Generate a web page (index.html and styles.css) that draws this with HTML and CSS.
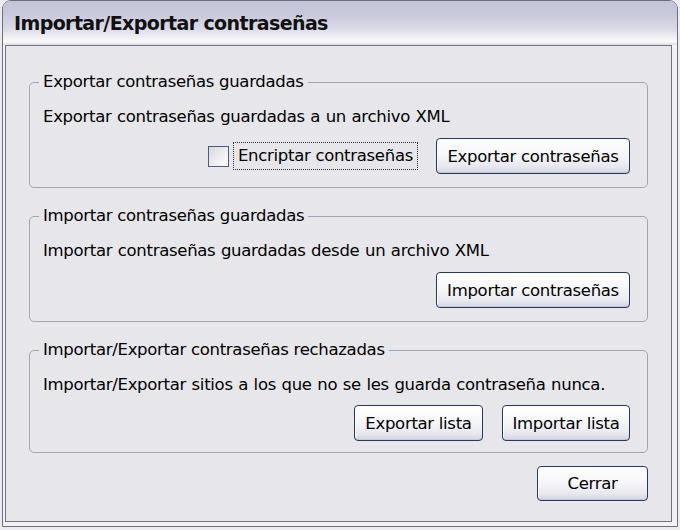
FILE: index.html
```html
<!DOCTYPE html>
<html lang="es">
<head>
<meta charset="utf-8">
<title>Importar/Exportar contraseñas</title>
<link rel="stylesheet" href="styles.css">
</head>
<body>
<div class="window">
  <div class="titlebar">Importar/Exportar contraseñas</div>
  <div class="frame">
    <div class="client">
      <fieldset class="group">
        <legend>Exportar contraseñas guardadas</legend>
        <div class="desc">Exportar contraseñas guardadas a un archivo XML</div>
        <div class="row">
          <label class="check">
            <span class="box"></span>
            <span class="focus">Encriptar contraseñas</span>
          </label>
          <button class="btn btn-wide">Exportar contraseñas</button>
        </div>
      </fieldset>
      <fieldset class="group">
        <legend>Importar contraseñas guardadas</legend>
        <div class="desc">Importar contraseñas guardadas desde un archivo XML</div>
        <div class="row">
          <button class="btn btn-wide">Importar contraseñas</button>
        </div>
      </fieldset>
      <fieldset class="group group-last">
        <legend>Importar/Exportar contraseñas rechazadas</legend>
        <div class="desc">Importar/Exportar sitios a los que no se les guarda contraseña nunca.</div>
        <div class="row">
          <button class="btn btn-export">Exportar lista</button>
          <button class="btn btn-import">Importar lista</button>
        </div>
      </fieldset>
      <div class="footer">
        <button class="btn btn-close">Cerrar</button>
      </div>
    </div>
  </div>
</div>
</body>
</html>
```
FILE: styles.css
```css
html, body {
  margin: 0;
  padding: 0;
}
body {
  width: 680px;
  height: 530px;
  background: #ececf0;
  font-family: "DejaVu Sans", Verdana, sans-serif;
  font-size: 16.5px;
  letter-spacing: -0.3px;
  color: #000;
  overflow: hidden;
}
.window {
  margin-left: 2px;
  width: 676px;
  height: 527px;
  box-sizing: border-box;
  border: 1px solid #6f6f80;
  border-radius: 9px 9px 0 0;
  display: flex;
  flex-direction: column;
  background: #f2f2f5;
  overflow: hidden;
}
.titlebar {
  height: 44px;
  flex: none;
  box-sizing: border-box;
  padding: 10px 0 0 11px;
  background: linear-gradient(#c4c4d8 0%, #c8c8db 30%, #d8d8e6 60%, #eeeef4 82%, #fafafc 92%, #dcdce4 100%);
  font-weight: bold;
  font-size: 19px;
  letter-spacing: -0.6px;
  line-height: 24px;
  color: #111;
}
.frame {
  flex: 1;
  display: flex;
  padding: 0 5px 4px 2px;
}
.client {
  flex: 1;
  border: 1px solid #727282;
  background: #e7e7eb;
  padding: 26px 23px 0 23px;
  display: flex;
  flex-direction: column;
}
.group {
  margin: 0 0 18px 0;
  border: 1px solid #a4a4b0;
  border-radius: 5px;
  padding: 0 17px 13px 13px;
  min-width: 0;
}
.group-last {
  padding-bottom: 11px;
}
.group legend {
  padding: 0 4px;
  margin-left: -4px;
  line-height: 20px;
}
.desc {
  margin-top: 15px;
  line-height: 20px;
  word-spacing: 0.6px;
}
.row {
  margin-top: 11px;
  display: flex;
  justify-content: flex-end;
  align-items: center;
  gap: 19px;
}
.group-last .row {
  margin-top: 10px;
}
.check {
  display: flex;
  align-items: center;
  gap: 5px;
}
.box {
  width: 19px;
  height: 19px;
  border: 1px solid #4b5d7c;
  background: linear-gradient(135deg, #d6d6de 0%, #ececf0 50%, #ffffff 100%);
}
.focus {
  outline: 1px dotted #333;
  padding: 2px 4px;
  line-height: 22px;
}
.btn {
  height: 36px;
  box-sizing: border-box;
  border: 1px solid #233a63;
  border-radius: 4px;
  background: linear-gradient(#ffffff 0%, #f7f7fa 45%, #e8e8ef 80%, #d4d4e0 100%);
  box-shadow: inset 0 -1px 0 #c8c8d6, inset 1px 0 0 #fff;
  font-family: inherit;
  font-size: 16.5px;
  letter-spacing: -0.3px;
  color: #000;
  padding: 0;
}
.btn-wide { width: 194px; }
.btn-export { width: 129px; }
.btn-import { width: 128px; }
.btn-close { width: 111px; height: 35px; }
.footer {
  margin-top: -5px;
  display: flex;
  justify-content: flex-end;
}
```
